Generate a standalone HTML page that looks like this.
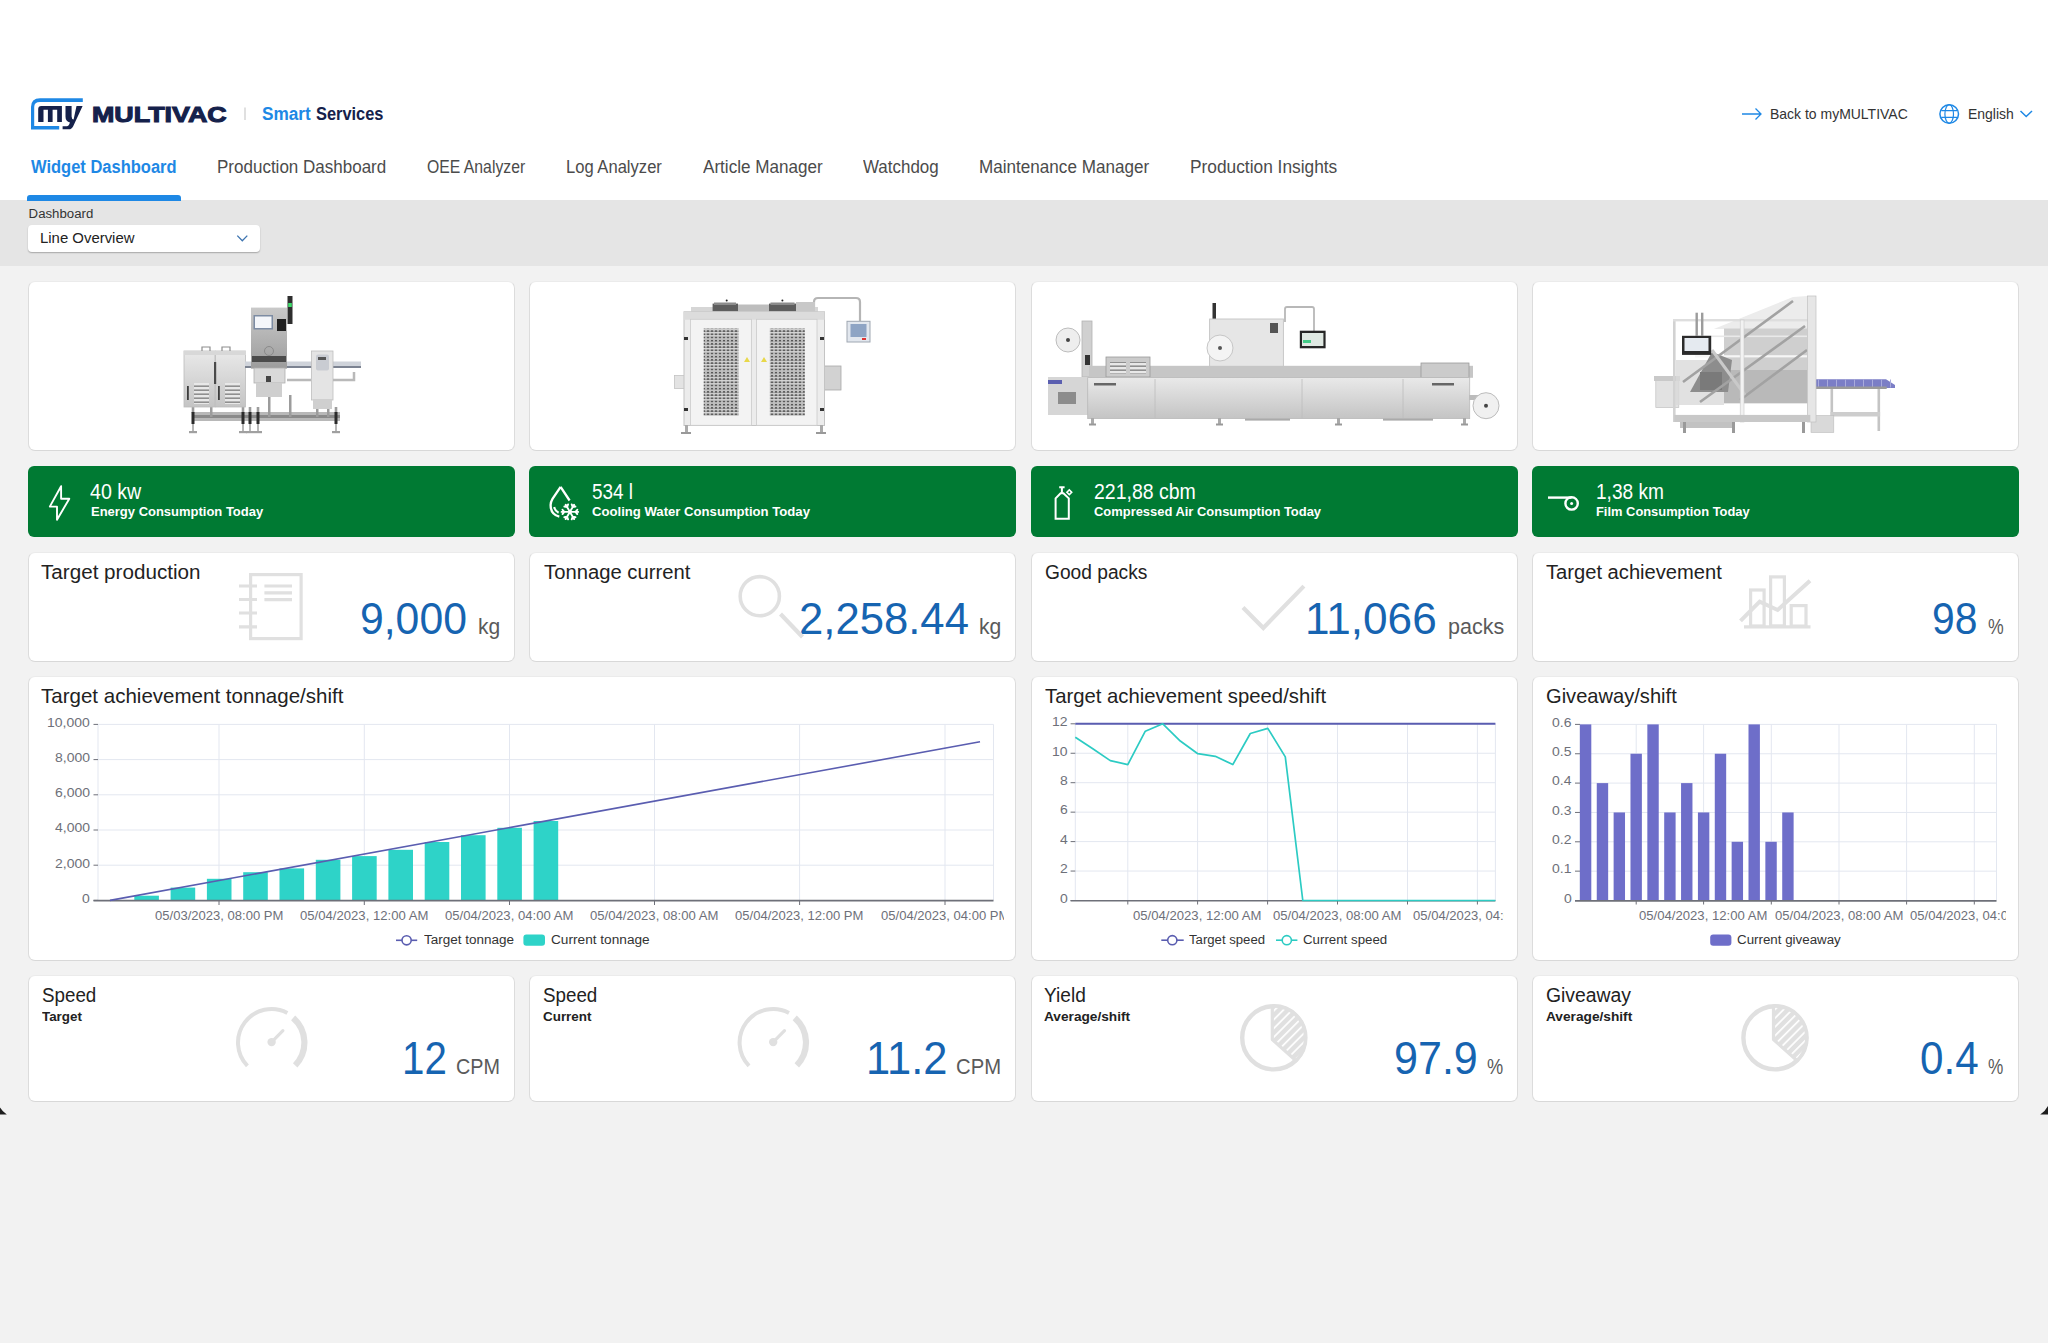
<!DOCTYPE html>
<html><head><meta charset="utf-8"><title>MULTIVAC Smart Services - Widget Dashboard</title>
<style>
html,body{margin:0;padding:0;}
body{width:2048px;height:1343px;overflow:hidden;position:relative;background:#f2f2f2;font-family:"Liberation Sans",sans-serif;}
.t{position:absolute;white-space:nowrap;transform-origin:0 0;}
.card{position:absolute;box-sizing:border-box;background:#fff;border-radius:7px;border:1px solid #dcdcdc;border-top-color:#ebebeb;border-bottom-color:#d8d8d8;}
.green{position:absolute;background:#007a33;border-radius:6px;}
svg{position:absolute;overflow:visible;}
</style></head><body>
<div style="position:absolute;left:0.00px;top:0.00px;width:2048.00px;height:200.00px;background:#fff;"></div>
<div style="position:absolute;left:0.00px;top:200.00px;width:2048.00px;height:66.00px;background:#e5e5e5;"></div>
<svg style="left:0;top:0" width="400" height="140" viewBox="0 0 400 140"><path d="M82.8 98.15 H40 Q31 98.15 31 107 V129.6 H59.2 V126 H34.2 V107 Q34.2 101.9 40 101.9 H82.8 Z" fill="#1e88e5"/><path d="M38.2 122 V109 Q38.2 105.9 41.3 105.9 H61.9 V122 H57.2 V109.8 H52.6 V122 H47.9 V109.8 H43.5 V122 Z" fill="#15214b"/><path d="M65.5 105.9 H71.6 V116.5 Q71.6 119 73.6 119.6 L76.5 105.9 H82.6 L73.2 126.2 Q71.8 129.3 68.8 129.3 H62.6 V126.2 H67 Q68.4 126.2 69 124.8 L70 122.4 Q65.5 121.6 65.5 116.8 Z" fill="#15214b"/><line x1="245" y1="107.5" x2="245" y2="120" stroke="#cfcfcf" stroke-width="1.3"/></svg>
<div class="t" style="left:92.30px;top:102.52px;font-size:22.97px;line-height:22.97px;color:#15214b;font-weight:700;transform:scaleX(1.1689);-webkit-text-stroke:1.1px #15214b;">MULTIVAC</div>
<div class="t" style="left:262.20px;top:104.65px;font-size:18.90px;line-height:18.90px;color:#1e88e5;font-weight:700;transform:scaleX(0.9113);">Smart</div>
<div class="t" style="left:316.20px;top:104.65px;font-size:18.90px;line-height:18.90px;color:#15214b;font-weight:700;transform:scaleX(0.8681);">Services</div>
<svg style="left:0;top:0" width="2048" height="140" viewBox="0 0 2048 140" fill="none" stroke="#1e88e5" stroke-width="1.5"><path d="M1742 114 H1761 M1755.5 108.5 L1761 114 L1755.5 119.5" stroke-width="1.3"/><circle cx="1949.2" cy="114" r="9.3"/><ellipse cx="1949.2" cy="114" rx="4.3" ry="9.3" stroke-width="1.2"/><path d="M1941.2 110.6 H1957.2 M1941.2 117.4 H1957.2" stroke-width="1.2"/><path d="M2020.5 111 L2026.2 116.5 L2032 111"/></svg>
<div class="t" style="left:1770.00px;top:106.14px;font-size:15.12px;line-height:15.12px;color:#333;transform:scaleX(0.9251);">Back to myMULTIVAC</div>
<div class="t" style="left:1967.60px;top:106.14px;font-size:15.12px;line-height:15.12px;color:#333;transform:scaleX(0.9237);">English</div>
<div class="t" style="left:30.70px;top:159.18px;font-size:17.44px;line-height:17.44px;color:#1e88e5;font-weight:700;transform:scaleX(0.9459);">Widget Dashboard</div>
<div class="t" style="left:216.90px;top:159.18px;font-size:17.44px;line-height:17.44px;color:#4b4b4b;transform:scaleX(0.9754);">Production Dashboard</div>
<div class="t" style="left:426.90px;top:159.18px;font-size:17.44px;line-height:17.44px;color:#4b4b4b;transform:scaleX(0.9044);">OEE Analyzer</div>
<div class="t" style="left:565.70px;top:159.18px;font-size:17.44px;line-height:17.44px;color:#4b4b4b;transform:scaleX(0.9509);">Log Analyzer</div>
<div class="t" style="left:702.50px;top:159.18px;font-size:17.44px;line-height:17.44px;color:#4b4b4b;transform:scaleX(0.9808);">Article Manager</div>
<div class="t" style="left:862.70px;top:159.18px;font-size:17.44px;line-height:17.44px;color:#4b4b4b;transform:scaleX(0.9720);">Watchdog</div>
<div class="t" style="left:978.90px;top:159.18px;font-size:17.44px;line-height:17.44px;color:#4b4b4b;transform:scaleX(0.9806);">Maintenance Manager</div>
<div class="t" style="left:1189.80px;top:159.18px;font-size:17.44px;line-height:17.44px;color:#4b4b4b;transform:scaleX(0.9930);">Production Insights</div>
<div style="position:absolute;left:27.00px;top:195.00px;width:153.50px;height:5.50px;background:#1e88e5;border-radius:3px 3px 0 0;"></div>
<div class="t" style="left:28.60px;top:207.19px;font-size:13.23px;line-height:13.23px;color:#333;">Dashboard</div>
<div style="position:absolute;left:28.00px;top:225.00px;width:232.00px;height:27.00px;background:#fff;border-radius:4px;box-shadow:0 1px 1.5px rgba(0,0,0,0.28);"></div>
<div class="t" style="left:40.10px;top:231.36px;font-size:14.68px;line-height:14.68px;color:#222;transform:scaleX(1.0166);">Line Overview</div>
<svg style="left:0;top:0" width="300" height="300" fill="none" stroke="#3d74b0" stroke-width="1.3"><path d="M237.3 235.6 L242.3 240.8 L247.3 235.6"/></svg>
<div class="card" style="left:28.00px;top:281px;width:487.00px;height:170px"></div>
<div class="green" style="left:28.00px;top:466px;width:487.00px;height:71px"></div>
<div class="card" style="left:28.00px;top:552px;width:487.00px;height:110px"></div>
<div class="card" style="left:28.00px;top:975.0px;width:487.00px;height:127.0px"></div>
<div class="card" style="left:529.00px;top:281px;width:487.00px;height:170px"></div>
<div class="green" style="left:529.00px;top:466px;width:487.00px;height:71px"></div>
<div class="card" style="left:529.00px;top:552px;width:487.00px;height:110px"></div>
<div class="card" style="left:529.00px;top:975.0px;width:487.00px;height:127.0px"></div>
<div class="card" style="left:1030.50px;top:281px;width:487.00px;height:170px"></div>
<div class="green" style="left:1030.50px;top:466px;width:487.00px;height:71px"></div>
<div class="card" style="left:1030.50px;top:552px;width:487.00px;height:110px"></div>
<div class="card" style="left:1030.50px;top:975.0px;width:487.00px;height:127.0px"></div>
<div class="card" style="left:1532.00px;top:281px;width:487.00px;height:170px"></div>
<div class="green" style="left:1532.00px;top:466px;width:487.00px;height:71px"></div>
<div class="card" style="left:1532.00px;top:552px;width:487.00px;height:110px"></div>
<div class="card" style="left:1532.00px;top:975.0px;width:487.00px;height:127.0px"></div>
<div class="card" style="left:28.00px;top:676px;width:988.00px;height:285px"></div>
<div class="card" style="left:1030.50px;top:676px;width:487.00px;height:285px"></div>
<div class="card" style="left:1532.00px;top:676px;width:487.00px;height:285px"></div>
<div class="t" style="left:90.40px;top:481.29px;font-size:21.22px;line-height:21.22px;color:#fff;transform:scaleX(0.9244);">40 kw</div>
<div class="t" style="left:90.70px;top:506.20px;font-size:12.79px;line-height:12.79px;color:#fff;font-weight:700;transform:scaleX(1.0159);">Energy Consumption Today</div>
<div class="t" style="left:592.00px;top:481.29px;font-size:21.22px;line-height:21.22px;color:#fff;transform:scaleX(0.8912);">534 l</div>
<div class="t" style="left:592.30px;top:506.20px;font-size:12.79px;line-height:12.79px;color:#fff;font-weight:700;transform:scaleX(1.0266);">Cooling Water Consumption Today</div>
<div class="t" style="left:1093.50px;top:481.29px;font-size:21.22px;line-height:21.22px;color:#fff;transform:scaleX(0.9179);">221,88 cbm</div>
<div class="t" style="left:1093.80px;top:506.20px;font-size:12.79px;line-height:12.79px;color:#fff;font-weight:700;transform:scaleX(1.0117);">Compressed Air Consumption Today</div>
<div class="t" style="left:1595.70px;top:481.29px;font-size:21.22px;line-height:21.22px;color:#fff;transform:scaleX(0.8995);">1,38 km</div>
<div class="t" style="left:1596.00px;top:506.20px;font-size:12.79px;line-height:12.79px;color:#fff;font-weight:700;transform:scaleX(1.0083);">Film Consumption Today</div>
<div class="t" style="left:41.30px;top:562.92px;font-size:19.77px;line-height:19.77px;color:#222;transform:scaleX(1.0442);">Target production</div>
<div class="t" style="left:359.70px;top:595.97px;font-size:45.06px;line-height:45.06px;color:#1664b1;transform:scaleX(0.9482);">9,000</div>
<div class="t" style="left:477.80px;top:615.50px;font-size:22.00px;line-height:22.00px;color:#5a5a5a;transform:scaleX(0.9556);">kg</div>
<div class="t" style="left:543.90px;top:562.92px;font-size:19.77px;line-height:19.77px;color:#222;transform:scaleX(1.0248);">Tonnage current</div>
<div class="t" style="left:799.00px;top:595.97px;font-size:45.06px;line-height:45.06px;color:#1664b1;transform:scaleX(0.9691);">2,258.44</div>
<div class="t" style="left:979.00px;top:615.50px;font-size:22.00px;line-height:22.00px;color:#5a5a5a;transform:scaleX(0.9599);">kg</div>
<div class="t" style="left:1044.80px;top:562.92px;font-size:19.77px;line-height:19.77px;color:#222;transform:scaleX(0.9708);">Good packs</div>
<div class="t" style="left:1305.00px;top:595.97px;font-size:45.06px;line-height:45.06px;color:#1664b1;transform:scaleX(0.9795);">11,066</div>
<div class="t" style="left:1447.50px;top:615.50px;font-size:22.00px;line-height:22.00px;color:#5a5a5a;transform:scaleX(0.9780);">packs</div>
<div class="t" style="left:1545.50px;top:562.92px;font-size:19.77px;line-height:19.77px;color:#222;transform:scaleX(1.0196);">Target achievement</div>
<div class="t" style="left:1932.00px;top:595.97px;font-size:45.06px;line-height:45.06px;color:#1664b1;transform:scaleX(0.9061);">98</div>
<div class="t" style="left:1988.00px;top:615.50px;font-size:22.00px;line-height:22.00px;color:#5a5a5a;transform:scaleX(0.8027);">%</div>
<div class="t" style="left:41.50px;top:986.22px;font-size:19.77px;line-height:19.77px;color:#222;transform:scaleX(0.9498);">Speed</div>
<div class="t" style="left:41.50px;top:1010.46px;font-size:13.08px;line-height:13.08px;color:#222;font-weight:700;transform:scaleX(1.0228);">Target</div>
<div class="t" style="left:401.50px;top:1036.43px;font-size:45.35px;line-height:45.35px;color:#1664b1;transform:scaleX(0.8884);">12</div>
<div class="t" style="left:455.90px;top:1055.12px;font-size:22.97px;line-height:22.97px;color:#5a5a5a;transform:scaleX(0.8603);">CPM</div>
<div class="t" style="left:543.20px;top:986.22px;font-size:19.77px;line-height:19.77px;color:#222;transform:scaleX(0.9498);">Speed</div>
<div class="t" style="left:543.20px;top:1010.46px;font-size:13.08px;line-height:13.08px;color:#222;font-weight:700;transform:scaleX(1.0267);">Current</div>
<div class="t" style="left:866.10px;top:1036.43px;font-size:45.35px;line-height:45.35px;color:#1664b1;transform:scaleX(0.9588);">11.2</div>
<div class="t" style="left:956.30px;top:1055.12px;font-size:22.97px;line-height:22.97px;color:#5a5a5a;transform:scaleX(0.8818);">CPM</div>
<div class="t" style="left:1044.40px;top:986.22px;font-size:19.77px;line-height:19.77px;color:#222;transform:scaleX(0.9669);">Yield</div>
<div class="t" style="left:1044.40px;top:1010.46px;font-size:13.08px;line-height:13.08px;color:#222;font-weight:700;transform:scaleX(1.0451);">Average/shift</div>
<div class="t" style="left:1393.60px;top:1036.43px;font-size:45.35px;line-height:45.35px;color:#1664b1;transform:scaleX(0.9496);">97.9</div>
<div class="t" style="left:1487.00px;top:1056.10px;font-size:22.00px;line-height:22.00px;color:#5a5a5a;transform:scaleX(0.8283);">%</div>
<div class="t" style="left:1545.50px;top:986.22px;font-size:19.77px;line-height:19.77px;color:#222;transform:scaleX(0.9793);">Giveaway</div>
<div class="t" style="left:1545.50px;top:1010.46px;font-size:13.08px;line-height:13.08px;color:#222;font-weight:700;transform:scaleX(1.0463);">Average/shift</div>
<div class="t" style="left:1920.00px;top:1036.43px;font-size:45.35px;line-height:45.35px;color:#1664b1;transform:scaleX(0.9296);">0.4</div>
<div class="t" style="left:1988.10px;top:1056.10px;font-size:22.00px;line-height:22.00px;color:#5a5a5a;transform:scaleX(0.7823);">%</div>
<svg style="left:0;top:0" width="2048" height="1343" viewBox="0 0 2048 1343"><g fill="none" stroke="#e0e0e0" stroke-width="3.2"><rect x="250.6" y="574.6" width="50.5" height="64" /><path d="M239 586 H257 M239 599.5 H257 M239 613 H257 M239 626.8 H257" /><path d="M264.4 586 H292 M264.4 592.8 H292 M264.4 599.7 H292" /></g><g fill="none" stroke="#e0e0e0"><circle cx="759.8" cy="596.2" r="19.6" stroke-width="3.6"/><path d="M780.5 614 L802.5 637" stroke-width="4.2"/></g><path d="M1243 607.6 L1263.3 628 L1303.9 586.1" fill="none" stroke="#e0e0e0" stroke-width="4.2"/><g fill="none" stroke="#e0e0e0" stroke-width="3.2"><path d="M1744 626.8 H1810.5"/><rect x="1750.6" y="590" width="13.5" height="36"/><rect x="1770.6" y="576.9" width="13.8" height="49"/><rect x="1791.2" y="605.6" width="14.8" height="20.5"/><path d="M1740.5 620.8 L1759.7 601.6 L1777.6 610 L1810 580.8" stroke-width="4"/></g><path d="M247.43 1065.94 A33.60 33.60 0 0 1 287.37 1012.93" fill="none" stroke="#e0e0e0" stroke-width="4"/><path d="M293.12 1017.85 A32.80 32.80 0 0 1 295.19 1065.38" fill="none" stroke="#e0e0e0" stroke-width="6.2"/><circle cx="271.60" cy="1042.10" r="4.2" fill="#e0e0e0"/><path d="M271.60 1042.10 L282.90 1030.60" stroke="#e0e0e0" stroke-width="3.2" stroke-linecap="round"/><path d="M749.03 1065.94 A33.60 33.60 0 0 1 788.97 1012.93" fill="none" stroke="#e0e0e0" stroke-width="4"/><path d="M794.72 1017.85 A32.80 32.80 0 0 1 796.79 1065.38" fill="none" stroke="#e0e0e0" stroke-width="6.2"/><circle cx="773.20" cy="1042.10" r="4.2" fill="#e0e0e0"/><path d="M773.20 1042.10 L784.50 1030.60" stroke="#e0e0e0" stroke-width="3.2" stroke-linecap="round"/><circle cx="1273.80" cy="1037.80" r="31.60" fill="none" stroke="#e0e0e0" stroke-width="4.4"/><defs><pattern id="h1" patternUnits="userSpaceOnUse" width="6.2" height="6.2" patternTransform="rotate(45)"><rect width="6.2" height="6.2" fill="#e0e0e0"/><rect x="2.6" width="1.7" height="6.2" fill="#fff"/></pattern></defs><path d="M1272.30 1039.60 V1006.20 A31.60 31.60 0 0 1 1295.75 1060.53 Z" fill="url(#h1)" stroke="#e0e0e0" stroke-width="3.2" stroke-linejoin="round"/><circle cx="1775.00" cy="1037.80" r="31.60" fill="none" stroke="#e0e0e0" stroke-width="4.4"/><defs><pattern id="h2" patternUnits="userSpaceOnUse" width="6.2" height="6.2" patternTransform="rotate(45)"><rect width="6.2" height="6.2" fill="#e0e0e0"/><rect x="2.6" width="1.7" height="6.2" fill="#fff"/></pattern></defs><path d="M1773.50 1039.60 V1006.20 A31.60 31.60 0 0 1 1796.95 1060.53 Z" fill="url(#h2)" stroke="#e0e0e0" stroke-width="3.2" stroke-linejoin="round"/><g fill="none" stroke="#fff" stroke-width="1.9" stroke-linejoin="miter"><path d="M61.1 486.2 V498.8 H69.3 L57 519.7 V506.6 H49.8 Z" stroke-linejoin="round"/><path d="M560.6 486.8 L569.6 500.5 M559.3 516.6 Q550.6 514.5 550.6 505 Q550.6 502 552.5 498.8 L560.6 486.8" stroke-width="2.3"/><path d="M554.2 507 Q555 511 558.6 512.8" stroke-width="2.1"/></g><path d="M561.60 511.90 L578.20 511.90 M565.75 504.71 L574.05 519.09 M574.05 504.71 L565.75 519.09 M575.50 511.90 L577.30 509.76 M575.50 511.90 L577.30 514.04 M572.70 516.75 L575.46 517.24 M572.70 516.75 L571.74 519.38 M567.10 516.75 L568.06 519.38 M567.10 516.75 L564.34 517.24 M564.30 511.90 L562.50 514.04 M564.30 511.90 L562.50 509.76 M567.10 507.05 L564.34 506.56 M567.10 507.05 L568.06 504.42 M572.70 507.05 L571.74 504.42 M572.70 507.05 L575.46 506.56" fill="none" stroke="#fff" stroke-width="1.9" stroke-linecap="round"/><g fill="none" stroke="#fff" stroke-width="2"><path d="M1055.6 518.8 V498.4 L1060.6 493.2 H1063.4 L1068.8 498.4 V518.8 Z"/><path d="M1059.2 487.2 H1064.6 M1061.9 487.2 V493.2"/><rect x="1067.6" y="490.6" width="3.4" height="3.4" transform="rotate(45 1069.3 492.3)" stroke-width="1.6"/></g><g fill="none" stroke="#fff" stroke-width="2.4"><path d="M1548 497.6 H1571.5"/><circle cx="1571.6" cy="503.4" r="6.2"/></g><circle cx="1571.6" cy="503.4" r="1.5" fill="#fff"/><g stroke="#e3e7f0" stroke-width="1" fill="none"><path d="M98.0 865.20 H993.5"/><path d="M98.0 830.00 H993.5"/><path d="M98.0 794.80 H993.5"/><path d="M98.0 759.60 H993.5"/><path d="M98.0 724.40 H993.5"/><path d="M98.00 724.4 V900.4"/><path d="M219.00 724.4 V900.4"/><path d="M364.30 724.4 V900.4"/><path d="M509.50 724.4 V900.4"/><path d="M654.50 724.4 V900.4"/><path d="M799.60 724.4 V900.4"/><path d="M945.00 724.4 V900.4"/><path d="M993.50 724.4 V900.4"/></g><g stroke="#6e7079" stroke-width="1" fill="none"><path d="M93.5 900.40 H98"/><path d="M93.5 865.20 H98"/><path d="M93.5 830.00 H98"/><path d="M93.5 794.80 H98"/><path d="M93.5 759.60 H98"/><path d="M93.5 724.40 H98"/><path d="M219.00 900.4 V905"/><path d="M364.30 900.4 V905"/><path d="M509.50 900.4 V905"/><path d="M654.50 900.4 V905"/><path d="M799.60 900.4 V905"/><path d="M945.00 900.4 V905"/></g><rect x="134.30" y="895.70" width="24.6" height="4.70" fill="#2ed3c8"/><rect x="170.60" y="887.60" width="24.6" height="12.80" fill="#2ed3c8"/><rect x="206.90" y="878.80" width="24.6" height="21.60" fill="#2ed3c8"/><rect x="243.20" y="872.20" width="24.6" height="28.20" fill="#2ed3c8"/><rect x="279.50" y="868.40" width="24.6" height="32.00" fill="#2ed3c8"/><rect x="315.80" y="859.80" width="24.6" height="40.60" fill="#2ed3c8"/><rect x="352.10" y="856.10" width="24.6" height="44.30" fill="#2ed3c8"/><rect x="388.40" y="849.80" width="24.6" height="50.60" fill="#2ed3c8"/><rect x="424.70" y="842.00" width="24.6" height="58.40" fill="#2ed3c8"/><rect x="461.00" y="835.20" width="24.6" height="65.20" fill="#2ed3c8"/><rect x="497.30" y="827.80" width="24.6" height="72.60" fill="#2ed3c8"/><rect x="533.60" y="821.00" width="24.6" height="79.40" fill="#2ed3c8"/><path d="M93.5 900.6 H993.5" stroke="#6e7079" stroke-width="1.6"/><path d="M110 900.4 L980 741.8" stroke="#5a5db0" stroke-width="1.6" fill="none"/><path d="M396 940.3 H417.2" stroke="#5a5db0" stroke-width="1.6"/><circle cx="406.6" cy="940.3" r="4.6" fill="#fff" stroke="#5a5db0" stroke-width="1.6"/><rect x="523.4" y="934.5" width="21.6" height="11.2" rx="3" fill="#2ed3c8"/><g stroke="#e3e7f0" stroke-width="1" fill="none"><path d="M1075.3 871.05 H1495.4"/><path d="M1075.3 841.60 H1495.4"/><path d="M1075.3 812.15 H1495.4"/><path d="M1075.3 782.70 H1495.4"/><path d="M1075.3 753.25 H1495.4"/><path d="M1075.3 723.80 H1495.4"/><path d="M1075.30 723.8 V900.5"/><path d="M1127.80 723.8 V900.5"/><path d="M1197.60 723.8 V900.5"/><path d="M1267.60 723.8 V900.5"/><path d="M1337.50 723.8 V900.5"/><path d="M1407.50 723.8 V900.5"/><path d="M1477.40 723.8 V900.5"/><path d="M1495.40 723.8 V900.5"/></g><g stroke="#6e7079" stroke-width="1" fill="none"><path d="M1070.6 900.50 H1075.3"/><path d="M1070.6 871.05 H1075.3"/><path d="M1070.6 841.60 H1075.3"/><path d="M1070.6 812.15 H1075.3"/><path d="M1070.6 782.70 H1075.3"/><path d="M1070.6 753.25 H1075.3"/><path d="M1070.6 723.80 H1075.3"/><path d="M1127.80 900.5 V904.5"/><path d="M1197.60 900.5 V904.5"/><path d="M1267.60 900.5 V904.5"/><path d="M1337.50 900.5 V904.5"/><path d="M1407.50 900.5 V904.5"/><path d="M1477.40 900.5 V904.5"/></g><path d="M1070.6 900.7 H1495.4" stroke="#6e7079" stroke-width="1.6"/><path d="M1075.3 723.8 H1495.4" stroke="#5a5db0" stroke-width="2"/><path d="M1075.30 737.20 L1092.80 748.83 L1110.30 760.61 L1127.80 764.59 L1145.30 731.16 L1162.80 723.80 L1180.30 741.03 L1197.80 753.69 L1215.30 756.34 L1232.80 764.59 L1250.30 733.52 L1267.80 728.36 L1285.30 756.93 L1302.80 900.50 L1495.40 900.50" stroke="#2ccbc3" stroke-width="1.7" fill="none" stroke-linejoin="round"/><path d="M1161.3 940.2 H1183.7" stroke="#5a5db0" stroke-width="1.6"/><circle cx="1172.3" cy="940.2" r="4.6" fill="#fff" stroke="#5a5db0" stroke-width="1.6"/><path d="M1276 940.2 H1297.4" stroke="#2ccbc3" stroke-width="1.6"/><circle cx="1286.8" cy="940.2" r="4.6" fill="#fff" stroke="#2ccbc3" stroke-width="1.6"/><g stroke="#e3e7f0" stroke-width="1" fill="none"><path d="M1580.0 871.15 H1996.5"/><path d="M1580.0 841.80 H1996.5"/><path d="M1580.0 812.45 H1996.5"/><path d="M1580.0 783.10 H1996.5"/><path d="M1580.0 753.75 H1996.5"/><path d="M1580.0 724.40 H1996.5"/><path d="M1580.00 724.4 V900.5"/><path d="M1636.20 724.4 V900.5"/><path d="M1703.60 724.4 V900.5"/><path d="M1771.30 724.4 V900.5"/><path d="M1839.00 724.4 V900.5"/><path d="M1906.60 724.4 V900.5"/><path d="M1974.30 724.4 V900.5"/><path d="M1996.50 724.4 V900.5"/></g><g stroke="#6e7079" stroke-width="1" fill="none"><path d="M1575 900.50 H1580"/><path d="M1575 871.15 H1580"/><path d="M1575 841.80 H1580"/><path d="M1575 812.45 H1580"/><path d="M1575 783.10 H1580"/><path d="M1575 753.75 H1580"/><path d="M1575 724.40 H1580"/><path d="M1636.20 900.3 V904.5"/><path d="M1703.60 900.3 V904.5"/><path d="M1771.30 900.3 V904.5"/><path d="M1839.00 900.3 V904.5"/><path d="M1906.60 900.3 V904.5"/><path d="M1974.30 900.3 V904.5"/></g><rect x="1579.90" y="724.40" width="11.4" height="176.10" fill="#6e6ec9"/><rect x="1596.76" y="783.10" width="11.4" height="117.40" fill="#6e6ec9"/><rect x="1613.62" y="812.45" width="11.4" height="88.05" fill="#6e6ec9"/><rect x="1630.48" y="753.75" width="11.4" height="146.75" fill="#6e6ec9"/><rect x="1647.34" y="724.40" width="11.4" height="176.10" fill="#6e6ec9"/><rect x="1664.20" y="812.45" width="11.4" height="88.05" fill="#6e6ec9"/><rect x="1681.06" y="783.10" width="11.4" height="117.40" fill="#6e6ec9"/><rect x="1697.92" y="812.45" width="11.4" height="88.05" fill="#6e6ec9"/><rect x="1714.78" y="753.75" width="11.4" height="146.75" fill="#6e6ec9"/><rect x="1731.64" y="841.80" width="11.4" height="58.70" fill="#6e6ec9"/><rect x="1748.50" y="724.40" width="11.4" height="176.10" fill="#6e6ec9"/><rect x="1765.36" y="841.80" width="11.4" height="58.70" fill="#6e6ec9"/><rect x="1782.22" y="812.45" width="11.4" height="88.05" fill="#6e6ec9"/><path d="M1575 900.8 H1996.5" stroke="#6e7079" stroke-width="1.8"/><rect x="1710.2" y="934.6" width="21.2" height="11.2" rx="3" fill="#6e6ec9"/></svg>
<div class="t" style="left:41.30px;top:686.59px;font-size:19.62px;line-height:19.62px;color:#222;transform:scaleX(1.0468);">Target achievement tonnage/shift</div>
<div class="t" style="left:1044.70px;top:686.59px;font-size:19.62px;line-height:19.62px;color:#222;transform:scaleX(1.0354);">Target achievement speed/shift</div>
<div class="t" style="left:1546.00px;top:686.59px;font-size:19.62px;line-height:19.62px;color:#222;transform:scaleX(1.0252);">Giveaway/shift</div>
<div class="t" style="left:81.83px;top:892.73px;font-size:12.94px;line-height:12.94px;color:#6e7079;transform:scaleX(1.0800);">0</div>
<div class="t" style="left:54.64px;top:857.53px;font-size:12.94px;line-height:12.94px;color:#6e7079;transform:scaleX(1.0800);">2,000</div>
<div class="t" style="left:54.64px;top:822.33px;font-size:12.94px;line-height:12.94px;color:#6e7079;transform:scaleX(1.0800);">4,000</div>
<div class="t" style="left:54.64px;top:787.13px;font-size:12.94px;line-height:12.94px;color:#6e7079;transform:scaleX(1.0800);">6,000</div>
<div class="t" style="left:54.64px;top:751.93px;font-size:12.94px;line-height:12.94px;color:#6e7079;transform:scaleX(1.0800);">8,000</div>
<div class="t" style="left:46.86px;top:716.73px;font-size:12.94px;line-height:12.94px;color:#6e7079;transform:scaleX(1.0800);">10,000</div>
<div class="t" style="left:1059.53px;top:892.83px;font-size:12.94px;line-height:12.94px;color:#6e7079;transform:scaleX(1.0800);">0</div>
<div class="t" style="left:1059.53px;top:863.38px;font-size:12.94px;line-height:12.94px;color:#6e7079;transform:scaleX(1.0800);">2</div>
<div class="t" style="left:1059.53px;top:833.93px;font-size:12.94px;line-height:12.94px;color:#6e7079;transform:scaleX(1.0800);">4</div>
<div class="t" style="left:1059.53px;top:804.48px;font-size:12.94px;line-height:12.94px;color:#6e7079;transform:scaleX(1.0800);">6</div>
<div class="t" style="left:1059.53px;top:775.03px;font-size:12.94px;line-height:12.94px;color:#6e7079;transform:scaleX(1.0800);">8</div>
<div class="t" style="left:1051.76px;top:745.58px;font-size:12.94px;line-height:12.94px;color:#6e7079;transform:scaleX(1.0800);">10</div>
<div class="t" style="left:1051.76px;top:716.13px;font-size:12.94px;line-height:12.94px;color:#6e7079;transform:scaleX(1.0800);">12</div>
<div class="t" style="left:1564.03px;top:892.83px;font-size:12.94px;line-height:12.94px;color:#6e7079;transform:scaleX(1.0800);">0</div>
<div class="t" style="left:1552.38px;top:863.48px;font-size:12.94px;line-height:12.94px;color:#6e7079;transform:scaleX(1.0800);">0.1</div>
<div class="t" style="left:1552.38px;top:834.13px;font-size:12.94px;line-height:12.94px;color:#6e7079;transform:scaleX(1.0800);">0.2</div>
<div class="t" style="left:1552.38px;top:804.78px;font-size:12.94px;line-height:12.94px;color:#6e7079;transform:scaleX(1.0800);">0.3</div>
<div class="t" style="left:1552.38px;top:775.43px;font-size:12.94px;line-height:12.94px;color:#6e7079;transform:scaleX(1.0800);">0.4</div>
<div class="t" style="left:1552.38px;top:746.08px;font-size:12.94px;line-height:12.94px;color:#6e7079;transform:scaleX(1.0800);">0.5</div>
<div class="t" style="left:1552.38px;top:716.73px;font-size:12.94px;line-height:12.94px;color:#6e7079;transform:scaleX(1.0800);">0.6</div>
<div class="t" style="left:154.80px;top:909.47px;font-size:13.66px;line-height:13.66px;color:#6e7079;transform:scaleX(0.9549);">05/03/2023, 08:00 PM</div>
<div class="t" style="left:300.10px;top:909.47px;font-size:13.66px;line-height:13.66px;color:#6e7079;transform:scaleX(0.9603);">05/04/2023, 12:00 AM</div>
<div class="t" style="left:445.30px;top:909.47px;font-size:13.66px;line-height:13.66px;color:#6e7079;transform:scaleX(0.9603);">05/04/2023, 04:00 AM</div>
<div class="t" style="left:590.30px;top:909.47px;font-size:13.66px;line-height:13.66px;color:#6e7079;transform:scaleX(0.9603);">05/04/2023, 08:00 AM</div>
<div class="t" style="left:735.40px;top:909.47px;font-size:13.66px;line-height:13.66px;color:#6e7079;transform:scaleX(0.9549);">05/04/2023, 12:00 PM</div>
<div style="position:absolute;overflow:hidden;left:860.00px;top:900.00px;width:143.50px;height:30.00px"><div class="t" style="left:20.80px;top:9.47px;font-size:13.66px;line-height:13.66px;color:#6e7079;transform:scaleX(0.9549);">05/04/2023, 04:00 PM</div></div>
<div class="t" style="left:1133.40px;top:909.47px;font-size:13.66px;line-height:13.66px;color:#6e7079;transform:scaleX(0.9603);">05/04/2023, 12:00 AM</div>
<div class="t" style="left:1273.30px;top:909.47px;font-size:13.66px;line-height:13.66px;color:#6e7079;transform:scaleX(0.9603);">05/04/2023, 08:00 AM</div>
<div style="position:absolute;overflow:hidden;left:1400.00px;top:900.00px;width:103.80px;height:30.00px"><div class="t" style="left:13.20px;top:9.47px;font-size:13.66px;line-height:13.66px;color:#6e7079;transform:scaleX(0.9549);">05/04/2023, 04:00 PM</div></div>
<div class="t" style="left:1639.20px;top:909.47px;font-size:13.66px;line-height:13.66px;color:#6e7079;transform:scaleX(0.9603);">05/04/2023, 12:00 AM</div>
<div class="t" style="left:1774.80px;top:909.47px;font-size:13.66px;line-height:13.66px;color:#6e7079;transform:scaleX(0.9603);">05/04/2023, 08:00 AM</div>
<div style="position:absolute;overflow:hidden;left:1900.00px;top:900.00px;width:106.30px;height:30.00px"><div class="t" style="left:10.10px;top:9.47px;font-size:13.66px;line-height:13.66px;color:#6e7079;transform:scaleX(0.9549);">05/04/2023, 04:00 PM</div></div>
<div class="t" style="left:423.80px;top:932.56px;font-size:13.08px;line-height:13.08px;color:#333;transform:scaleX(1.0323);">Target tonnage</div>
<div class="t" style="left:550.80px;top:932.56px;font-size:13.08px;line-height:13.08px;color:#333;transform:scaleX(1.0440);">Current tonnage</div>
<div class="t" style="left:1189.00px;top:932.56px;font-size:13.08px;line-height:13.08px;color:#333;transform:scaleX(1.0061);">Target speed</div>
<div class="t" style="left:1303.20px;top:932.56px;font-size:13.08px;line-height:13.08px;color:#333;transform:scaleX(1.0157);">Current speed</div>
<div class="t" style="left:1737.20px;top:932.56px;font-size:13.08px;line-height:13.08px;color:#333;transform:scaleX(1.0198);">Current giveaway</div>
<svg style="left:0;top:0" width="2048" height="1343"><path d="M0 1107.5 Q2.5 1111.5 6.8 1114.6 H0 Z" fill="#1e1e1e"/><path d="M2048 1106 Q2045 1111.5 2040.2 1114.6 H2048 Z" fill="#1e1e1e"/></svg>
<svg style="left:0;top:0" width="2048" height="460" viewBox="0 0 2048 460"><defs><linearGradient id="gm" x1="0" y1="0" x2="0" y2="1"><stop offset="0" stop-color="#e9e9e9"/><stop offset="1" stop-color="#c4c4c4"/></linearGradient><linearGradient id="gd" x1="0" y1="0" x2="0" y2="1"><stop offset="0" stop-color="#c9c9c9"/><stop offset="1" stop-color="#9c9c9c"/></linearGradient><linearGradient id="gh" x1="0" y1="0" x2="1" y2="0"><stop offset="0" stop-color="#d6d6d6"/><stop offset="0.5" stop-color="#f0f0f0"/><stop offset="1" stop-color="#cdcdcd"/></linearGradient><pattern id="grill" patternUnits="userSpaceOnUse" width="4" height="3.2"><rect width="4" height="3.2" fill="#d8d8d8"/><rect y="0.6" width="4" height="1.7" fill="#555"/><circle cx="2" cy="1.45" r="0.8" fill="#e5e5e5"/></pattern><pattern id="vent" patternUnits="userSpaceOnUse" width="3" height="4"><rect width="3" height="4" fill="#e8e8e8"/><rect y="1.4" width="3" height="1.6" fill="#8f8f8f"/></pattern></defs><g><rect x="192" y="412" width="148" height="9" fill="#b8b8b8"/><rect x="192" y="415" width="148" height="3" fill="#8a8a8a"/><rect x="191.7" y="407" width="2.6" height="6" fill="#9c9c9c"/><rect x="191.5" y="412" width="3" height="12" fill="#2b2b2b"/><rect x="192.2" y="424" width="1.6" height="7" fill="#a5a5a5"/><rect x="189" y="431" width="8" height="2.2" fill="#a0a0a0"/><rect x="241.7" y="407" width="2.6" height="6" fill="#9c9c9c"/><rect x="241.5" y="412" width="3" height="12" fill="#2b2b2b"/><rect x="242.2" y="424" width="1.6" height="7" fill="#a5a5a5"/><rect x="239" y="431" width="8" height="2.2" fill="#a0a0a0"/><rect x="248.7" y="407" width="2.6" height="6" fill="#9c9c9c"/><rect x="248.5" y="412" width="3" height="12" fill="#2b2b2b"/><rect x="249.2" y="424" width="1.6" height="7" fill="#a5a5a5"/><rect x="246" y="431" width="8" height="2.2" fill="#a0a0a0"/><rect x="256.7" y="407" width="2.6" height="6" fill="#9c9c9c"/><rect x="256.5" y="412" width="3" height="12" fill="#2b2b2b"/><rect x="257.2" y="424" width="1.6" height="7" fill="#a5a5a5"/><rect x="254" y="431" width="8" height="2.2" fill="#a0a0a0"/><rect x="334.7" y="407" width="2.6" height="6" fill="#9c9c9c"/><rect x="334.5" y="412" width="3" height="12" fill="#2b2b2b"/><rect x="335.2" y="424" width="1.6" height="7" fill="#a5a5a5"/><rect x="332" y="431" width="8" height="2.2" fill="#a0a0a0"/><rect x="210" y="395" width="2.5" height="22" fill="#9c9c9c"/><rect x="268" y="395" width="2.5" height="22" fill="#9c9c9c"/><rect x="289" y="395" width="2.5" height="22" fill="#9c9c9c"/><rect x="316" y="395" width="2.5" height="22" fill="#9c9c9c"/><rect x="327" y="395" width="2.5" height="22" fill="#9c9c9c"/><rect x="184" y="351" width="31" height="56" fill="url(#gm)" stroke="#bcbcbc" stroke-width="0.8"/><rect x="215.5" y="351" width="30" height="56" fill="url(#gm)" stroke="#bcbcbc" stroke-width="0.8"/><rect x="184" y="351" width="62" height="4" fill="#d8d8d8"/><rect x="194" y="383" width="15" height="21" fill="url(#vent)"/><rect x="225" y="383" width="15" height="21" fill="url(#vent)"/><path d="M202 351 V347 H210 V351 M222 351 V347 H230 V351" fill="none" stroke="#8e8e8e" stroke-width="1.2"/><rect x="214" y="362" width="2.2" height="22" fill="#4a4a4a"/><rect x="187" y="386" width="1.8" height="14" fill="#3d3d3d"/><rect x="218" y="386" width="1.8" height="14" fill="#3d3d3d"/><rect x="245" y="361.5" width="116" height="6.5" fill="#cfd3da"/><rect x="245" y="366" width="116" height="2" fill="#7c8391"/><rect x="251" y="307.6" width="36" height="61" fill="url(#gd)"/><rect x="253.5" y="315" width="19.5" height="14.5" fill="#7d8ca3"/><rect x="252" y="356" width="34" height="6" fill="#4b4b4b"/><rect x="255" y="316.5" width="16.5" height="11.5" fill="#f4f6fa"/><rect x="277" y="319" width="9" height="12" fill="#1f1f1f"/><circle cx="269" cy="351" r="4.5" fill="none" stroke="#8a8a8a" stroke-width="1"/><rect x="287.5" y="296" width="5" height="28" fill="#2e2e2e"/><rect x="288.2" y="303" width="3.6" height="4" fill="#3ddc6a"/><rect x="254" y="368" width="31" height="15" fill="#d9d9d9" stroke="#b0b0b0" stroke-width="0.8"/><rect x="256" y="383" width="26" height="14" fill="#cfcfcf"/><rect x="266" y="376" width="5" height="6" fill="#444"/><rect x="311.5" y="351" width="21.5" height="49" fill="#e4e4e4" stroke="#bdbdbd" stroke-width="0.8"/><rect x="316" y="354.5" width="13" height="16" rx="2" fill="#c9ccd2"/><rect x="318" y="357" width="8" height="3" fill="#555"/><rect x="313" y="399" width="19" height="10" fill="#cfcfcf"/><path d="M333 380 H354 V372 M287 380 H311" fill="none" stroke="#b9b9b9" stroke-width="2.5"/></g><g><path d="M814 311 V302 Q814 298 818 298 H856 Q860 298 860 302 V321" fill="none" stroke="#b5b5b5" stroke-width="2.2"/><rect x="847" y="321.3" width="23" height="20.7" fill="#e2e7ee" stroke="#9fa7b2" stroke-width="1"/><rect x="850.5" y="324" width="16" height="13" fill="#8ea4c4"/><rect x="862" y="338" width="4" height="2" fill="#d33"/><rect x="674.5" y="375.5" width="10" height="13" fill="#e3e3e3" stroke="#c2c2c2" stroke-width="0.8"/><rect x="824.5" y="366" width="16.5" height="24" fill="#d2d2d2" stroke="#a9a9a9" stroke-width="0.8"/><rect x="691" y="307" width="127" height="5" fill="#d6d6d6"/><rect x="738" y="304.5" width="31" height="7" fill="#bdbdbd"/><rect x="796" y="302" width="19" height="9.5" fill="#c8c8c8"/><rect x="712.6" y="303.6" width="25.4" height="8" fill="#5e5e5e"/><rect x="714" y="302.5" width="22" height="2.5" fill="#8c8c8c"/><rect x="769" y="303.6" width="27" height="8" fill="#5e5e5e"/><rect x="770.5" y="302.5" width="24" height="2.5" fill="#8c8c8c"/><circle cx="726.7" cy="300.6" r="1" fill="#222"/><circle cx="782.4" cy="300.6" r="1" fill="#222"/><rect x="684" y="311.8" width="140.5" height="113.7" fill="#ececec" stroke="#c4c4c4" stroke-width="1"/><rect x="684" y="311.8" width="140.5" height="8" fill="#dcdcdc"/><rect x="690.6" y="319.3" width="60.8" height="106" fill="#f3f3f3" stroke="#cbcbcb" stroke-width="0.8"/><rect x="756.6" y="319.3" width="60.4" height="106" fill="#f3f3f3" stroke="#cbcbcb" stroke-width="0.8"/><rect x="703.7" y="328.5" width="35" height="87.5" fill="url(#grill)"/><rect x="769.8" y="328.5" width="35" height="87.5" fill="url(#grill)"/><rect x="684" y="337" width="4" height="3" fill="#333"/><rect x="684" y="408" width="4" height="3" fill="#333"/><rect x="820" y="337" width="4" height="3" fill="#333"/><rect x="820" y="408" width="4" height="3" fill="#333"/><path d="M744 362 l3 -5 l3 5 Z M761 362 l3 -5 l3 5 Z" fill="#e8d84a"/><rect x="685" y="425" width="3" height="8" fill="#aaa"/><rect x="681" y="432" width="10" height="2" fill="#999"/><rect x="820" y="425" width="3" height="8" fill="#aaa"/><rect x="816" y="432" width="10" height="2" fill="#999"/></g><g><path d="M1285 322 V309 Q1285 307 1287 307 H1312 Q1314 307 1314 309 V331" fill="none" stroke="#b8b8b8" stroke-width="1.8"/><rect x="1299.8" y="330.7" width="25.8" height="17.6" fill="#262626"/><rect x="1302" y="333" width="21.4" height="13" fill="#dfe8e2"/><rect x="1303" y="340" width="8" height="3" fill="#4c8"/><rect x="1212.5" y="303" width="3.5" height="17" fill="#333"/><rect x="1209.6" y="319" width="73.8" height="49" fill="#e6e6e6" stroke="#c3c3c3" stroke-width="0.9"/><rect x="1270" y="323" width="8" height="10" fill="#555"/><circle cx="1220" cy="348" r="13" fill="#f4f4f4" stroke="#c6c6c6" stroke-width="1"/><circle cx="1220" cy="348" r="2" fill="#555"/><rect x="1082" y="321" width="10" height="56" fill="#d0d0d0" stroke="#b2b2b2" stroke-width="0.8"/><circle cx="1068" cy="340" r="12" fill="#eeeeee" stroke="#bdbdbd" stroke-width="1"/><circle cx="1068" cy="340" r="2" fill="#444"/><rect x="1085" y="355" width="5" height="10" fill="#333"/><rect x="1048" y="377" width="42" height="38" fill="#d6d6d6"/><rect x="1048" y="380" width="14" height="4" fill="#5b5fb0"/><rect x="1058" y="392" width="18" height="12" fill="#8c8c8c"/><rect x="1089" y="365.8" width="384" height="12" fill="#c6c6c6"/><rect x="1106" y="357" width="44" height="20" fill="#cbcbcb" stroke="#9a9a9a" stroke-width="0.8"/><rect x="1110" y="362" width="16" height="12" fill="url(#vent)"/><rect x="1130" y="362" width="16" height="12" fill="url(#vent)"/><rect x="1421" y="363" width="48" height="15" fill="#cbcbcb" stroke="#9a9a9a" stroke-width="0.8"/><rect x="1087.7" y="377.6" width="382" height="41" fill="url(#gm)" stroke="#b9b9b9" stroke-width="0.8"/><path d="M1155 379 V418 M1302 379 V418 M1403 379 V418" stroke="#bdbdbd" stroke-width="0.8"/><rect x="1094" y="383" width="22" height="2.5" fill="#666"/><rect x="1432" y="383" width="22" height="2.5" fill="#666"/><rect x="1469" y="395" width="10" height="5" fill="#bbb"/><circle cx="1486" cy="405.7" r="13" fill="#f0f0f0" stroke="#bcbcbc" stroke-width="1"/><circle cx="1486" cy="405.7" r="2" fill="#444"/><rect x="1091" y="418" width="3" height="6" fill="#aaa"/><rect x="1089" y="423.5" width="7" height="2" fill="#999"/><rect x="1218" y="418" width="3" height="6" fill="#aaa"/><rect x="1216" y="423.5" width="7" height="2" fill="#999"/><rect x="1337" y="418" width="3" height="6" fill="#aaa"/><rect x="1335" y="423.5" width="7" height="2" fill="#999"/><rect x="1463" y="418" width="3" height="6" fill="#aaa"/><rect x="1461" y="423.5" width="7" height="2" fill="#999"/><rect x="1245" y="418.6" width="45" height="2" fill="#aaa"/><rect x="1383" y="418.6" width="50" height="2" fill="#aaa"/></g><g><rect x="1830.5" y="388" width="2.6" height="43" fill="#c4c4c4"/><rect x="1877.5" y="388" width="2.6" height="43" fill="#c4c4c4"/><rect x="1830.5" y="412" width="49.6" height="4.5" fill="#cdcdcd"/><rect x="1811" y="415.5" width="22.8" height="17" fill="#d9d9d9" stroke="#bdbdbd" stroke-width="0.6"/><polygon points="1812.7,379.3 1886,379.3 1895,385 1895,388 1812.7,388" fill="#7b7ec6"/><rect x="1818" y="379.5" width="1" height="8" fill="#a9abdc"/><rect x="1827" y="379.5" width="1" height="8" fill="#a9abdc"/><rect x="1836" y="379.5" width="1" height="8" fill="#a9abdc"/><rect x="1845" y="379.5" width="1" height="8" fill="#a9abdc"/><rect x="1854" y="379.5" width="1" height="8" fill="#a9abdc"/><rect x="1863" y="379.5" width="1" height="8" fill="#a9abdc"/><rect x="1872" y="379.5" width="1" height="8" fill="#a9abdc"/><rect x="1881" y="379.5" width="1" height="8" fill="#a9abdc"/><rect x="1890" y="379.5" width="1" height="8" fill="#a9abdc"/><rect x="1812.7" y="386.5" width="74" height="2.5" fill="#9a9a9a"/><rect x="1655.8" y="377.3" width="23" height="30.3" fill="#e2e2e2" stroke="#c3c3c3" stroke-width="0.7"/><rect x="1654" y="376" width="26" height="5" fill="#c9c9c9"/><polygon points="1713.8,329 1793,296.9 1807.4,296 1807.4,329" fill="#ececec"/><rect x="1724" y="328.5" width="83.4" height="75" fill="#cfcfcf"/><rect x="1724" y="370" width="83.4" height="33" fill="#b9b9b9"/><rect x="1695" y="355.2" width="112.4" height="2.2" fill="#f6f6f6"/><rect x="1695" y="335.5" width="112.4" height="1.6" fill="#e9e9e9"/><rect x="1673" y="320" width="2.6" height="102" fill="#d2d2d2"/><rect x="1673" y="319" width="135" height="2.4" fill="#dedede"/><rect x="1676" y="360" width="48" height="45" fill="#dadada" opacity="0.8"/><polygon points="1690,392 1712,352 1732,360 1728,392" fill="#8d8d8d"/><rect x="1700" y="372" width="22" height="18" fill="#7a7a7a"/><path d="M1683 382 L1793 301 M1700 402 L1805 326 M1740 400 L1807 350" stroke="#a2a2a2" stroke-width="2.6"/><path d="M1712 350 L1745 395" stroke="#c9c9c9" stroke-width="3"/><rect x="1740.2" y="320" width="3.8" height="102" fill="#f2f2f2" stroke="#c8c8c8" stroke-width="0.6"/><rect x="1807.4" y="296" width="8.6" height="126" fill="#e6e6e6" stroke="#bfbfbf" stroke-width="0.7"/><rect x="1674.3" y="414.9" width="136" height="7.1" fill="#c8c8c8"/><rect x="1680" y="422" width="55" height="6" fill="#c2c2c2"/><rect x="1683" y="422" width="3" height="11" fill="#9a9a9a"/><rect x="1732" y="422" width="3" height="11" fill="#9a9a9a"/><rect x="1802" y="422" width="3" height="11" fill="#9a9a9a"/><rect x="1695.5" y="312.7" width="2.4" height="23" fill="#9c9c9c"/><rect x="1701" y="312.7" width="2.4" height="23" fill="#9c9c9c"/><rect x="1682" y="335.8" width="29.2" height="19.1" fill="#2b2b2b"/><rect x="1684.5" y="338" width="24" height="13" fill="#e5eaf0"/></g></svg>
</body></html>
